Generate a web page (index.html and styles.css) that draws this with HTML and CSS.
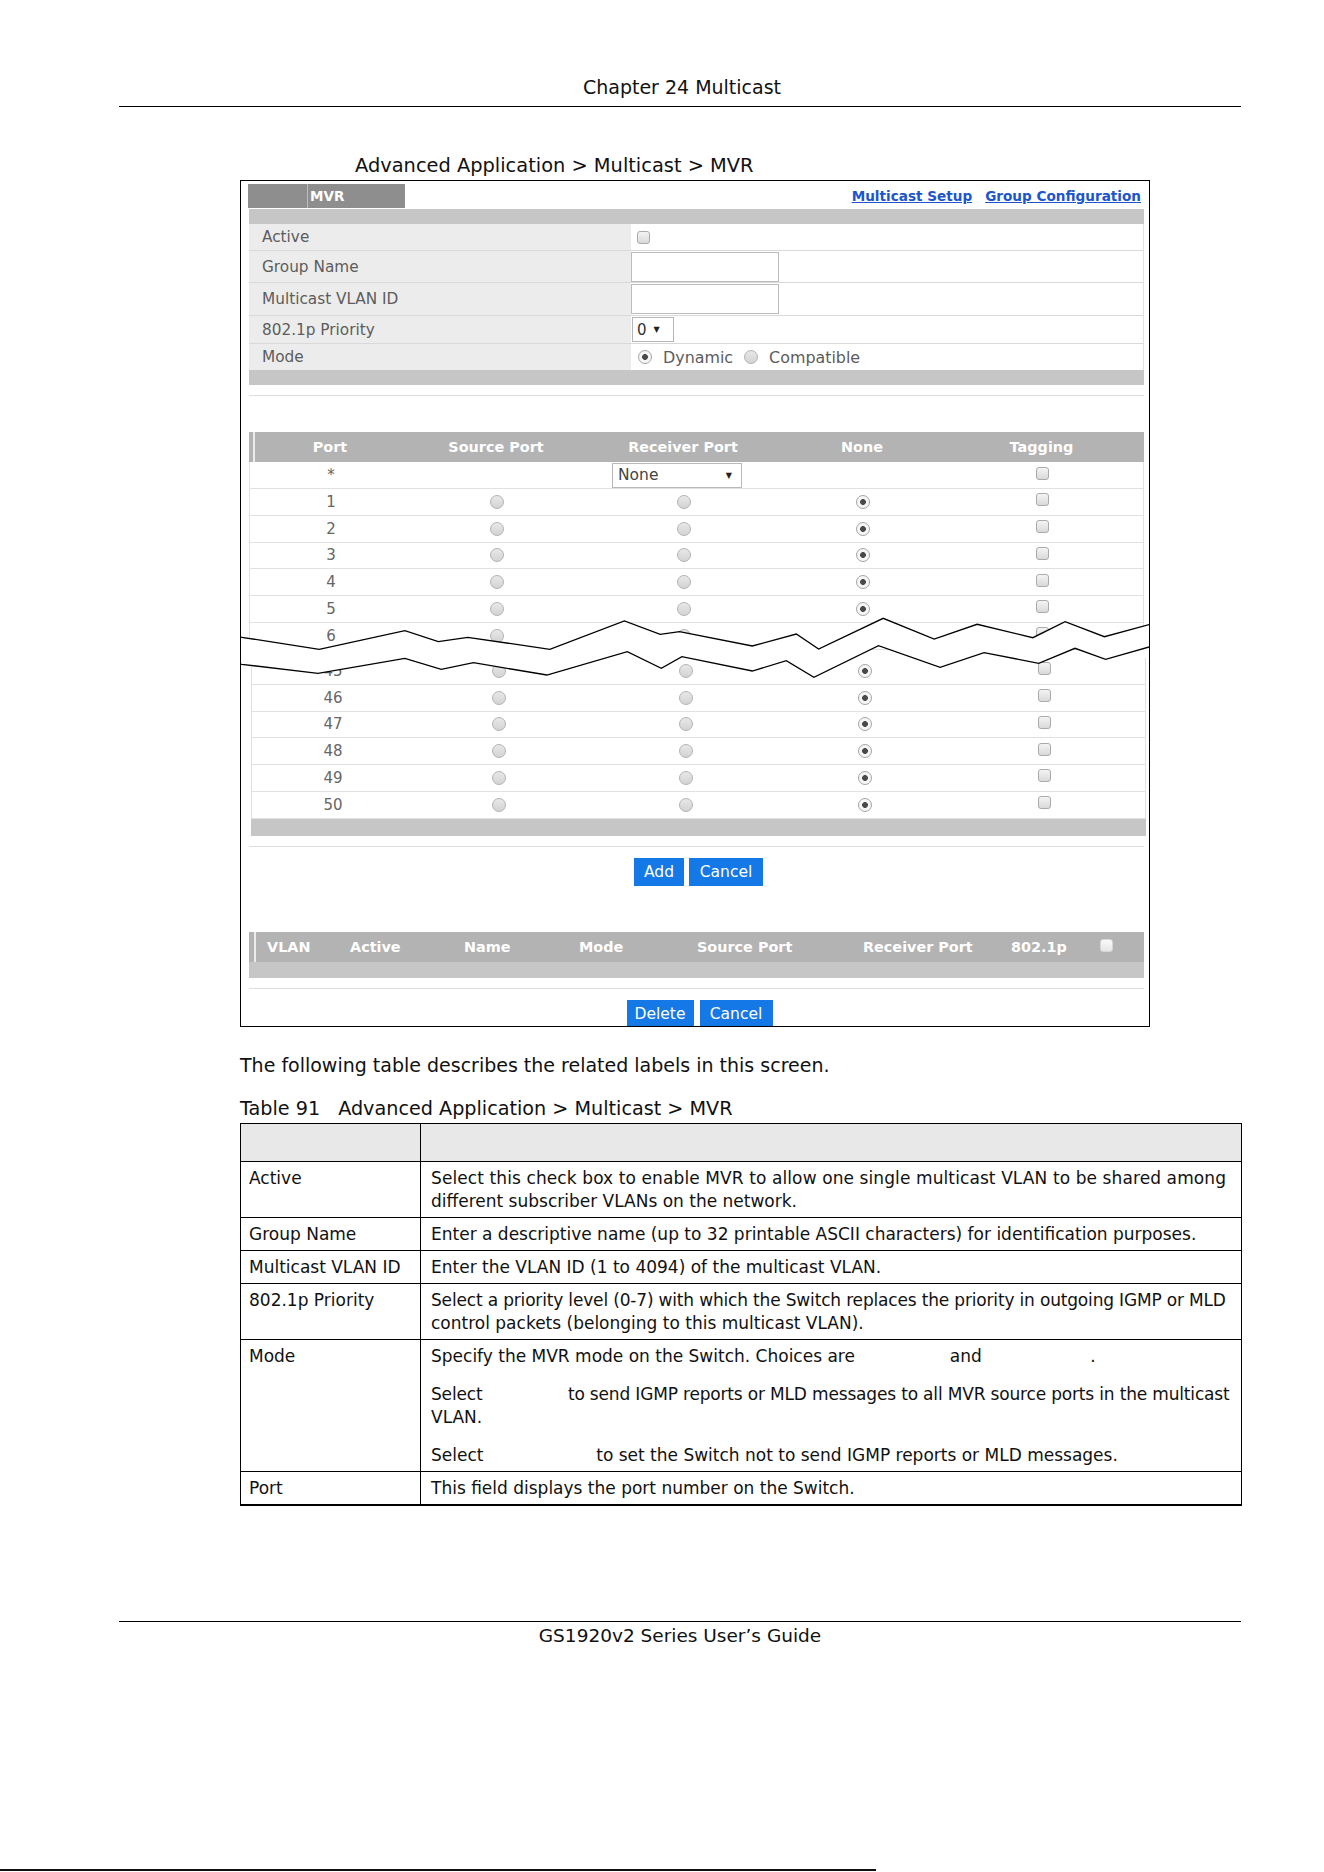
FILE: index.html
```html
<!DOCTYPE html>
<html lang="en">
<head>
  <meta charset="UTF-8">
  <meta name="viewport" content="width=device-width, initial-scale=1.0">
  <title>Chapter 24 Multicast</title>
  <link rel="stylesheet" href="styles.css">
</head>
<body>
  <div class="chapter">Chapter 24 Multicast</div>
  <div class="crumb">Advanced Application &gt; Multicast &gt; MVR</div>

  <div class="shot">
    <div class="tabbar">
      <div class="tab"><span class="tab-blank"></span><span class="tab-label">MVR</span></div>
      <div class="links"><a href="#">Multicast Setup</a><a href="#">Group Configuration</a></div>
    </div>
    <div class="band top"></div>

    <div class="form">
      <div class="frow h27">
        <div class="flabel">Active</div>
        <div class="fval"><span class="chk ml6"></span></div>
      </div>
      <div class="frow h32">
        <div class="flabel">Group Name</div>
        <div class="fval"><span class="txt"></span></div>
      </div>
      <div class="frow h33">
        <div class="flabel">Multicast VLAN ID</div>
        <div class="fval"><span class="txt"></span></div>
      </div>
      <div class="frow h28">
        <div class="flabel">802.1p Priority</div>
        <div class="fval"><span class="sel0">0 <i class="arrow">&#9660;</i></span></div>
      </div>
      <div class="frow h26 last">
        <div class="flabel">Mode</div>
        <div class="fval">
          <span class="rad on ml7"></span><span class="opt">Dynamic</span>
          <span class="rad ml11"></span><span class="opt">Compatible</span>
        </div>
      </div>
    </div>
    <div class="band"></div>
    <div class="sep"></div>

    <div class="ports">
      <div class="phead"><span>Port</span><span>Source Port</span><span>Receiver Port</span><span>None</span><span>Tagging</span></div>
      <div class="prow star">
        <span>*</span><span></span><span class="selnone">None <i class="arrow">&#9660;</i></span><span></span><span class="chk up"></span>
      </div>
      <div class="prow"><span>1</span><span class="rad"></span><span class="rad"></span><span class="rad on"></span><span class="chk up"></span></div>
      <div class="prow"><span>2</span><span class="rad"></span><span class="rad"></span><span class="rad on"></span><span class="chk up"></span></div>
      <div class="prow"><span>3</span><span class="rad"></span><span class="rad"></span><span class="rad on"></span><span class="chk up"></span></div>
      <div class="prow"><span>4</span><span class="rad"></span><span class="rad"></span><span class="rad on"></span><span class="chk up"></span></div>
      <div class="prow"><span>5</span><span class="rad"></span><span class="rad"></span><span class="rad on"></span><span class="chk up"></span></div>
      <div class="prow"><span>6</span><span class="rad"></span><span class="rad"></span><span class="rad on"></span><span class="chk up"></span></div>
    </div>

    <div class="ports lower">
      <div class="prow"><span>45</span><span class="rad"></span><span class="rad"></span><span class="rad on"></span><span class="chk up"></span></div>
      <div class="prow"><span>46</span><span class="rad"></span><span class="rad"></span><span class="rad on"></span><span class="chk up"></span></div>
      <div class="prow"><span>47</span><span class="rad"></span><span class="rad"></span><span class="rad on"></span><span class="chk up"></span></div>
      <div class="prow"><span>48</span><span class="rad"></span><span class="rad"></span><span class="rad on"></span><span class="chk up"></span></div>
      <div class="prow"><span>49</span><span class="rad"></span><span class="rad"></span><span class="rad on"></span><span class="chk up"></span></div>
      <div class="prow"><span>50</span><span class="rad"></span><span class="rad"></span><span class="rad on"></span><span class="chk up"></span></div>
      <div class="band b17"></div>
    </div>
    <div class="sep"></div>

    <div class="btns">
      <button class="w50">Add</button><button class="w74">Cancel</button>
    </div>

    <div class="vhead">
      <span class="c1">VLAN</span>
      <span class="c2">Active</span>
      <span class="c3">Name</span>
      <span class="c4">Mode</span>
      <span class="c5">Source Port</span>
      <span class="c6">Receiver Port</span>
      <span class="c7">802.1p</span>
      <span class="chk light"></span>
    </div>
    <div class="band b16"></div>
    <div class="sep"></div>

    <div class="btns wide">
      <button class="w67">Delete</button><button class="w73">Cancel</button>
    </div>

    <!-- torn edge between port 6 and port 45 -->
    <svg class="tear" width="912" height="80" viewBox="0 0 912 80">
      <polygon fill="#fff" points="0,27 1.7,27.3 79.2,39.3 164.9,20.7 198.3,31.7 227.7,27.3 309.8,39.3 384.4,11 420.2,24.3 439.5,21.7 512.3,36 556.3,24 578.6,39 643.2,8.3 694.2,29 737.1,14.3 792.8,27.7 825.1,11.7 864.4,26.7 912,13.8 912,36.2 865.6,49.3 835,38.3 798.7,53.3 744.1,42.7 700.1,57.3 638.5,35.7 573.9,67.3 546.3,50.7 512.3,61 441.9,46.7 421.3,58.3 387.3,41.7 306.9,65 233.5,52.7 201.3,59.3 164.9,48.3 78,63.3 1.7,54.3 0,54"/>
      <polyline fill="none" stroke="#000" stroke-width="1.3" points="0,27 1.7,27.3 79.2,39.3 164.9,20.7 198.3,31.7 227.7,27.3 309.8,39.3 384.4,11 420.2,24.3 439.5,21.7 512.3,36 556.3,24 578.6,39 643.2,8.3 694.2,29 737.1,14.3 792.8,27.7 825.1,11.7 864.4,26.7 912,13.8"/>
      <polyline fill="none" stroke="#000" stroke-width="1.3" points="0,54 1.7,54.3 78,63.3 164.9,48.3 201.3,59.3 233.5,52.7 306.9,65 387.3,41.7 421.3,58.3 441.9,46.7 512.3,61 546.3,50.7 573.9,67.3 638.5,35.7 700.1,57.3 744.1,42.7 798.7,53.3 835,38.3 865.6,49.3 912,36.2"/>
    </svg>
  </div>

  <p class="intro">The following table describes the related labels in this screen.</p>
  <div class="caption"><span class="tno">Table 91</span>Advanced Application &gt; Multicast &gt; MVR</div>

  <table class="desc">
    <tr><th class="lab"></th><th></th></tr>
    <tr>
      <td>Active</td>
      <td><span class="loose">Select this check box to enable MVR to allow one single multicast VLAN to be shared among</span><br>different subscriber VLANs on the network.</td>
    </tr>
    <tr>
      <td>Group Name</td>
      <td>Enter a descriptive name (up to 32 printable ASCII characters) for identification purposes.</td>
    </tr>
    <tr>
      <td>Multicast VLAN ID</td>
      <td>Enter the VLAN ID (1 to 4094) of the multicast VLAN.</td>
    </tr>
    <tr>
      <td>802.1p Priority</td>
      <td><span class="tight">Select a priority level (0-7) with which the Switch replaces the priority in outgoing IGMP or MLD</span><br>control packets (belonging to this multicast VLAN).</td>
    </tr>
    <tr>
      <td>Mode</td>
      <td>
        <div>Specify the MVR mode on the Switch. Choices are <span class="gap g84"></span> and <span class="gap g103"></span>.</div>
        <div class="para"><span class="tight">Select <span class="gap g75"></span> to send IGMP reports or MLD messages to all MVR source ports in the multicast</span><br>VLAN.</div>
        <div class="para">Select <span class="gap g102"></span> to set the Switch not to send IGMP reports or MLD messages.</div>
      </td>
    </tr>
    <tr class="last">
      <td>Port</td>
      <td>This field displays the port number on the Switch.</td>
    </tr>
  </table>

  <div class="foot">GS1920v2 Series User’s Guide</div>
  <div class="edge"></div>
</body>
</html>
```

FILE: styles.css
```css
body {
  margin: 0;
  font-family: "DejaVu Sans", sans-serif;
  color: #111;
  background: #fff;
}
.chapter {
  margin: 0 83px 0 119px;
  padding: 76px 0 8px 4px;
  font-size: 19px;
  line-height: 22px;
  text-align: center;
  border-bottom: 1px solid #000;
}
.crumb {
  margin: 48px 0 0 355px;
  font-size: 19.4px;
  line-height: 22px;
}

/* screenshot frame */
.shot {
  position: relative;
  margin: 3px 0 0 240px;
  width: 910px;
  height: 847px;
  box-sizing: border-box;
  border: 1px solid #000;
  padding: 3px 5px 0 8px;
  overflow: hidden;
}
.tabbar {
  display: flex;
  justify-content: space-between;
  height: 24px;
}
.tab {
  display: flex;
  width: 157px;
  margin-left: -1px;
  background: #8e8e8e;
}
.tab-blank {
  width: 59px;
  border-right: 1px solid #bdbdbd;
}
.tab-label {
  padding-left: 2px;
  color: #fff;
  font-weight: bold;
  font-size: 13.5px;
  line-height: 24px;
}
.links {
  display: flex;
  gap: 13px;
  padding-right: 3px;
  line-height: 24px;
}
.links a {
  color: #1c55cc;
  font-weight: bold;
  font-size: 13.6px;
  text-decoration: underline;
}
.band {
  height: 15px;
  background: #c6c6c6;
}
.band.top {
  margin-top: 1px;
}
.band.b17 {
  height: 17px;
}
.band.b16 {
  height: 16px;
}
.sep {
  height: 1px;
  margin-top: 10px;
  background: #dedede;
}

/* form */
.form {
  border-right: 1px solid #e2e2e2;
}
.frow {
  display: grid;
  grid-template-columns: 382px 1fr;
  box-sizing: border-box;
  border-bottom: 1px solid #d9d9d9;
}
.frow.last {
  border-bottom: none;
}
.h27 { height: 27px; }
.h32 { height: 32px; }
.h33 { height: 33px; }
.h28 { height: 28px; }
.h26 { height: 26px; }
.flabel {
  display: flex;
  align-items: center;
  padding-left: 13px;
  background: #ececec;
  color: #5c5c5c;
  font-size: 15.3px;
}
.fval {
  display: flex;
  align-items: center;
  background: #fff;
}
.txt {
  width: 148px;
  height: 30px;
  box-sizing: border-box;
  border: 1px solid #bcbcbc;
}
.sel0 {
  display: flex;
  align-items: center;
  gap: 7px;
  width: 42px;
  height: 25px;
  margin-left: 1px;
  padding-left: 4px;
  box-sizing: border-box;
  border: 1px solid #b5b5b5;
  color: #333;
  font-size: 15px;
}
.arrow {
  font-style: normal;
  font-size: 8px;
  color: #222;
}
.opt {
  margin-left: 11px;
  color: #5c5c5c;
  font-size: 15.9px;
}
.ml6 { margin-left: 6px; }
.ml7 { margin-left: 7px; }
.ml11 { margin-left: 11px; }

/* controls */
.rad {
  width: 14px;
  height: 14px;
  box-sizing: border-box;
  border: 1px solid #b3b3b3;
  border-radius: 50%;
  background: linear-gradient(#e8e8e8, #d3d3d3);
}
.rad.on {
  border-color: #a5a5a5;
  background: radial-gradient(circle, #4a4a4a 0 2.6px, #f6f6f6 3.2px);
}
.chk {
  width: 13px;
  height: 13px;
  box-sizing: border-box;
  border: 1px solid #ababab;
  border-radius: 3px;
  background: linear-gradient(#f4f4f4, #d9d9d9);
}
.chk.up {
  margin-bottom: 4px;
}
.chk.light {
  align-self: center;
  margin-bottom: 2px;
  border-color: #d6d6d6;
  background: linear-gradient(#fafafa, #e6e6e6);
}

/* port table */
.ports {
  margin-top: 36px;
}
.ports.lower {
  margin: 8.5px -2px 0 2px;
}
.phead,
.prow {
  display: grid;
  grid-template-columns: 162px 170px 204px 154px 205px;
}
.phead {
  height: 30px;
  background: linear-gradient(to right, #b3b3b3 4px, #ececec 4px, #ececec 6px, #b3b3b3 6px);
  color: #fff;
  font-weight: bold;
  font-size: 14.4px;
  line-height: 30px;
  text-align: center;
}
.prow {
  height: 26.75px;
  box-sizing: border-box;
  align-items: center;
  justify-items: center;
  border: 1px solid #e1e1e1;
  border-top: none;
  color: #666;
  font-size: 15px;
}
.prow.star {
  height: 27px;
}
.selnone {
  display: flex;
  justify-content: space-between;
  align-items: center;
  width: 130px;
  height: 25px;
  margin-right: 14px;
  padding: 0 9px 0 5px;
  box-sizing: border-box;
  border: 1px solid #b9b9b9;
  color: #444;
  font-size: 15.5px;
}

/* buttons */
.btns {
  display: flex;
  justify-content: center;
  gap: 5px;
  margin-top: 11px;
  padding-left: 4px;
}
.btns.wide {
  gap: 6px;
  padding-left: 6px;
}
.btns button {
  height: 28px;
  padding: 0;
  border: none;
  background: #1479e6;
  color: #fff;
  font-family: inherit;
  font-size: 15.5px;
}
.w50 { width: 50px; }
.w74 { width: 74px; }
.w67 { width: 67px; }
.w73 { width: 73px; }

/* vlan list header */
.vhead {
  display: flex;
  height: 30px;
  margin-top: 46px;
  padding-left: 18px;
  background: linear-gradient(to right, #b3b3b3 5px, #ececec 5px, #ececec 7px, #b3b3b3 7px);
  color: #fff;
  font-weight: bold;
  font-size: 14.4px;
  line-height: 30px;
  white-space: nowrap;
}
.vhead .c1 { width: 83px; }
.vhead .c2 { width: 114px; }
.vhead .c3 { width: 115px; }
.vhead .c4 { width: 118px; }
.vhead .c5 { width: 166px; }
.vhead .c6 { width: 148px; }
.vhead .c7 { width: 89px; }

.tear {
  position: absolute;
  left: -1px;
  top: 429px;
}

/* description */
.intro {
  margin: 27px 0 0 240px;
  font-size: 19px;
  line-height: 22px;
}
.caption {
  margin: 22px 0 0 240px;
  font-size: 19.2px;
  line-height: 22px;
}
.tno {
  margin-right: 18px;
}
.desc {
  margin: 3px 0 0 240px;
  width: 1002px;
  table-layout: fixed;
  border-collapse: collapse;
  font-size: 17px;
  line-height: 23px;
}
.desc th {
  height: 37px;
  padding: 0;
  border: 1px solid #000;
  background: #e8e8e8;
}
.desc th.lab {
  width: 179px;
}
.desc td {
  padding: 5px 8px 4px 8px;
  border: 1px solid #000;
  vertical-align: top;
  white-space: nowrap;
}
.desc td + td {
  padding-left: 10px;
}
.desc tr.last td {
  border-bottom-width: 2px;
}
.loose {
  letter-spacing: 0.1px;
}
.tight {
  letter-spacing: -0.17px;
}
.para {
  margin-top: 15px;
}
.gap {
  display: inline-block;
}
.g84 { width: 84px; }
.g103 { width: 103px; }
.g75 { width: 75px; }
.g102 { width: 102px; }

.foot {
  margin: 115px 83px 0 119px;
  padding-top: 3px;
  border-top: 1px solid #000;
  font-size: 18.5px;
  line-height: 22px;
  text-align: center;
}
.edge {
  width: 876px;
  height: 2px;
  margin-top: 222px;
  background: #111;
}
```
